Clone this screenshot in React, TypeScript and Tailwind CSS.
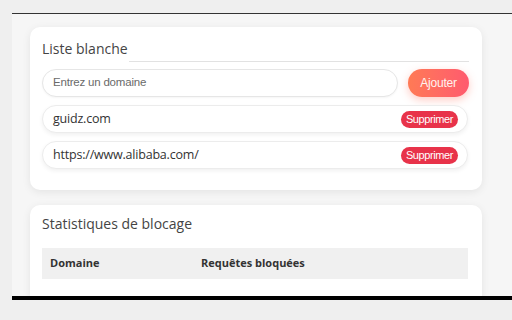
import React from "react";

const poppins = { fontFamily: '"Open Sans", "Noto Sans", sans-serif' };
const arial = { fontFamily: '"Liberation Sans", Arial, sans-serif' };

function Row({ text }: { text: string }) {
  return (
    <div className="flex items-center justify-between h-[28px] w-[426px] rounded-full bg-white border border-[#ececec] shadow-[0_2px_4px_rgba(0,0,0,0.06)] pl-[10px] pr-[9px]">
      <span className="text-[12.5px] tracking-[-0.2px] text-[#333]" style={poppins}>{text}</span>
      <button className="h-[17px] w-[57px] rounded-full bg-[#e8334a] text-white text-[11px] leading-none tracking-[-0.4px]" style={arial}>
        Supprimer
      </button>
    </div>
  );
}

export default function App() {
  return (
    <div className="w-[512px] h-[320px] bg-[#efefef] overflow-hidden pt-[13px] pl-[12px]">
      <div className="h-[287px] bg-[#f6f6f6] border-t border-[#333] border-b-[4px] border-b-black overflow-hidden pl-[18px] pt-[13px]">
        <div className="w-[452px] h-[163px] bg-white rounded-[10px] shadow-[0_2px_8px_rgba(0,0,0,0.08)] pl-[12px] pt-[11px]">
          <div className="flex items-end h-[24px]">
            <h2 className="text-[14px] text-[#444] font-medium leading-none pb-[6px]" style={poppins}>Liste blanche</h2>
            <div className="ml-[1px] h-px w-[340px] bg-[#e2e2e2]" />
          </div>
          <div className="flex items-center mt-[7px] gap-[10px]">
            <div className="h-[28px] w-[356px] rounded-full border border-[#e6e6e6] bg-white flex items-center pl-[10px] shadow-[0_1px_2px_rgba(0,0,0,0.04)]">
              <span className="text-[11.5px] tracking-[-0.2px] text-[#6a6a6a]" style={arial}>Entrez un domaine</span>
            </div>
            <button className="h-[28px] w-[61px] rounded-full bg-gradient-to-r from-[#ff7a55] to-[#ff5a6e] text-[#fff3f0] text-[12px] tracking-[-0.2px] shadow-[0_3px_8px_rgba(255,110,90,0.35)]" style={arial}>
              Ajouter
            </button>
          </div>
          <div className="flex flex-col gap-[8px] mt-[8px]">
            <Row text="guidz.com" />
            <Row text="https://www.alibaba.com/" />
          </div>
        </div>
        <div className="mt-[15px] w-[452px] h-[100px] bg-white rounded-[10px] shadow-[0_2px_8px_rgba(0,0,0,0.08)] pl-[12px] pt-[10px]">
          <h2 className="text-[14px] text-[#444] font-medium leading-[18px]" style={poppins}>Statistiques de blocage</h2>
          <div className="mt-[15px] w-[426px] h-[31px] bg-[#f0f0f0] flex items-center text-[11px] font-bold text-[#333]" style={poppins}>
            <span className="pl-[8px] w-[159px]">Domaine</span>
            <span>Requêtes bloquées</span>
          </div>
        </div>
      </div>
    </div>
  );
}
